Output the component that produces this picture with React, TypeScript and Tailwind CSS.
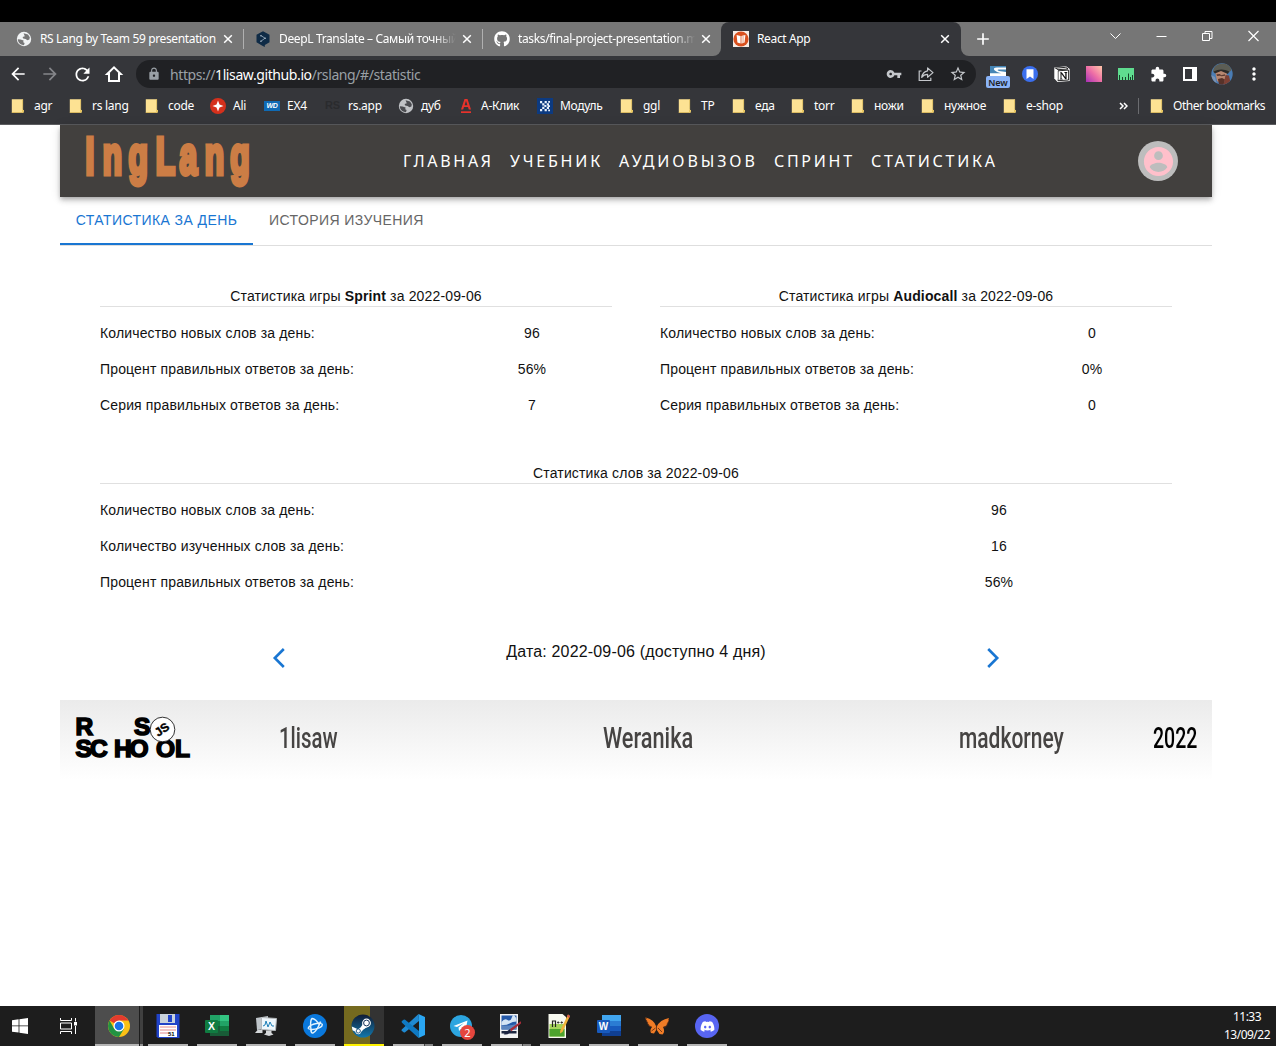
import type { ReactNode } from "react";
import {
  MdAdd, MdArrowBack, MdArrowForward, MdExtension, MdLock, MdMoreVert,
  MdRefresh, MdStarBorder, MdVpnKey,
} from "react-icons/md";
import { FaDiscord, FaGithub } from "react-icons/fa";

/* ---------- small icons ---------- */

const Globe = ({ color = "#f1f3f4", land = "#5f6165" }: { color?: string; land?: string }) => (
  <svg viewBox="0 0 16 16" className="size-4">
    <circle cx="8" cy="8" r="7.200" fill={color} />
    <path d="M1.800 8.200 4.500 8.400 7.600 9.400 7.200 11.200 8.600 12 8 14.200 6 13.800C3.400 12.800 2 11 1.800 8.200zM7.600 2.200 12 3.600 13.800 6.200 13.400 8.400 11.400 9.200 9.600 8 7.200 7.600 6.600 6 8.800 5.200z" fill={land} />
  </svg>
);

const DeepL = () => (
  <svg viewBox="0 0 16 16" className="size-4">
    <path d="M8 .2 14.500 3.800v7.400L9.800 14v2L7.300 14.700 1.500 11.200V3.800z" fill="#0f2b46" />
    <path d="M6 4.600 10 7.200 6 10.200" fill="none" stroke="#8fa3b5" strokeWidth=".9" />
    <circle cx="5.900" cy="4.700" r=".8" fill="#a9b7c4" /><circle cx="10.200" cy="7.200" r=".8" fill="#a9b7c4" /><circle cx="5.900" cy="10.200" r=".8" fill="#a9b7c4" />
  </svg>
);

const AppFavicon = () => (
  <svg viewBox="0 0 16 16" className="size-4">
    <rect width="16" height="16" fill="#f6ece6" />
    <circle cx="8" cy="8" r="7.600" fill="#d9501e" />
    <path d="M3.600 4 7.600 5v7.500L4.400 11.400zM12.400 4 8.400 5v7.500L11.600 11.400z" fill="#fff" />
    <path d="M8.600 5v7.500l1-.3V4.700zM10.300 4.500v7.500l.8-.3V4.300z" fill="#f0b59b" />
  </svg>
);

const Folder = () => (
  <svg viewBox="0 0 16 16" className="size-4">
    <path d="M.8 1.300h11v10.200l1.200 1-.6 2.300H.8z" fill="#fde293" />
    <path d="M11.200 1.300h.9V11l-1.200 1.500.2 2.300h1.300l.6-2.300-1.200-1" fill="#ecc85e" />
    <path d="M.8 14.200h10v.7H.8z" fill="#e3bd58" />
  </svg>
);

const AliIcon = () => (
  <svg viewBox="0 0 16 16" className="size-4">
    <circle cx="8" cy="8" r="8" fill="#d5301c" />
    <path d="M8 2.500 9.500 6.500 13.500 8 9.500 9.500 8 13.500 6.500 9.500 2.500 8 6.500 6.500z" fill="#fff" />
  </svg>
);

const WdIcon = () => (
  <span className="flex h-[10px] w-4 items-center justify-center bg-[#0f6ab4] font-['Liberation_Sans'] text-[7px] leading-none font-bold text-white italic">WD</span>
);

const RsIcon = () => (
  <span className="w-4 font-['Liberation_Sans'] text-[11px] leading-none font-bold text-[#2a2b2e]">RS</span>
);

const AClick = () => (
  <svg viewBox="0 0 16 16" className="size-4">
    <path d="M3 11.500 6.500 1h3L13 11.500h-2.200L10 9H6l-.8 2.500zM6.600 7.200h2.800L8 2.800z" fill="#e8322b" />
    <path d="M3 13.300h10V15H3z" fill="#e8322b" />
  </svg>
);

const ModuleIcon = () => (
  <svg viewBox="0 0 16 16" className="size-4">
    <rect width="16" height="16" fill="#0c3a80" />
    <g fill="#e8f1fb">
      <path d="M3 3h2.200v2.200H3zM5.200 5.200h2.200v2.200H5.200zM7.400 7.100h2v2h-2zM5.200 8.800h2.200V11H5.200zM3 11h2.200v2.200H3z" />
      <path d="M7.600 3h2.200v2.200H7.600zM9.800 5.200H12v2.200H9.800zM10.800 7.200h2.200v1.800h-2.200zM9.800 8.800H12V11H9.800zM7.600 11h2.200v2.200H7.600zM11.200 3h1.800v1.800h-1.800zM11.200 11.400h1.800v1.800h-1.800z" />
    </g>
  </svg>
);

const Share = () => (
  <svg viewBox="0 0 18 18" className="size-[18px]" fill="none" stroke="#c4c7cb" strokeWidth="1.200">
    <path d="M4.500 6H2.200v9.500h11.600v-2.700" />
    <path d="M10.600 3v2.900C7.100 6.500 5.300 8.700 4.700 12.400c1.500-2.200 3.300-3 5.900-3v2.900l5.400-4.700z" strokeLinejoin="round" />
  </svg>
);

const Close = () => (
  <svg viewBox="0 0 10 10" className="size-[10px]" fill="none" stroke="#fff" strokeWidth="1.500"><path d="m1.200 1.200 7.600 7.600M8.800 1.200 1.200 8.800" /></svg>
);

const Home = () => (
  <svg viewBox="0 0 20 20" className="size-5" fill="none" stroke="#fff" strokeWidth="2">
    <path d="M5 17V10H3.200L10 3.400 16.800 10H15v7z" />
  </svg>
);

/* ---------- extension icons ---------- */

const NewExt = () => (
  <span className="relative block h-4 w-4 overflow-visible">
    <svg viewBox="0 0 16 16" className="size-4">
      <rect width="16" height="16" fill="#4585b5" />
      <path d="M16 1.500H7Q2.500 1.800 4.500 4.300 6.500 6.500 11 7.200H0V11h16V6L9 5Q6.500 4 8.500 3.500H16z" fill="#fff" />
    </svg>
    <span className="absolute top-[10px] -left-1 flex h-[12px] w-6 items-center justify-center rounded-[2px] bg-[#8ab4f8] font-['Noto_Sans'] text-[9px] leading-none font-semibold tracking-[-0.1px] text-[#202124]">New</span>
  </span>
);

const BlueBookmark = () => (
  <svg viewBox="0 0 16 16" className="size-4">
    <circle cx="8" cy="8" r="8" fill="#3b6fee" />
    <path d="M4.500 3.200h7v9.800L8 10.500 4.500 13z" fill="#fff" />
  </svg>
);

const NotionIcon = () => (
  <svg viewBox="0 0 16 16" className="size-4">
    <path d="M.3 1.600 12 .3 15.700 3v12L3.500 15.900.3 12.500z" fill="#fff" />
    <path d="M1.500 2.200 11.700 1.300 14 3 4 3.700zM4 4.800 14.600 4.100V14L4 14.700z" fill="none" stroke="#111" strokeWidth=".9" />
    <path d="M1.600 2.800 3.600 4.600V14L1.600 12z" fill="#fff" />
    <path d="M5.800 6.300h2l3.500 5V7l-1-.3V6h3v.6l-.7.4v6.200h-1.300L7.500 8v4.600l1.200.3v.5H5.600V13l.9-.3V7z" fill="#111" />
  </svg>
);

const GradientSquare = () => <span className="size-4 bg-linear-to-bl from-[#ffc7a8] via-[#ee6fa5] to-[#a92ab4]" />;

const Ruler = () => (
  <svg viewBox="0 0 16 16" className="size-4">
    <rect y="2" width="16" height="12" fill="#5fdc8f" />
    <path d="M1.500 14V9M4.500 14v-3M7.500 14v-3M10.500 14V7.500M12.500 14v-3M14.500 14V9" stroke="#17442a" />
  </svg>
);

const SidePanel = () => (
  <svg viewBox="0 0 16 16" className="size-4">
    <path d="M1 1h14v14H1zM3 3v10h7V3z" fill="#fff" fillRule="evenodd" />
  </svg>
);

const Profile = () => (
  <svg viewBox="0 0 22 22" className="size-[22px]">
    <defs><clipPath id="face"><circle cx="11" cy="11" r="10.700" /></clipPath></defs>
    <g clipPath="url(#face)">
      <rect width="22" height="22" fill="#4a7db5" />
      <path d="M0 12 4 14 6 22H0z" fill="#7b93b3" />
      <path d="M4 8 16 8 15.500 15 11 21 6 18z" fill="#b98770" />
      <path d="M2 8Q3 1 11 .5T20.500 7L17.500 10 10 7 3 10z" fill="#5c5d54" />
      <path d="M2.500 8.500Q10 4.500 18 8.200L17 11 10 8 4 10.500z" fill="#2d2a28" />
      <path d="M5.500 11.300 9 11 10 12.200 14 11.300V12.700L10.500 13.200 9 12.800 6 13z" fill="#5c3a30" />
      <path d="M7 16 11 15 14 16.500 12.500 22H8z" fill="#573229" />
      <path d="M14.500 12 18 12.500 20 22H12.500z" fill="#7e4034" />
    </g>
  </svg>
);

/* ---------- browser chrome ---------- */

function Tab({ icon, title, active, divider, fade }: { icon: ReactNode; title: string; active?: boolean; divider?: boolean; fade?: boolean }) {
  return (
    <div className={`relative flex h-[34px] items-center pl-3 ${active ? "w-60 rounded-t-lg bg-[#35363a]" : "w-[239px]"}`}>
      <span className="flex w-6 shrink-0 text-white">{icon}</span>
      <span className={`w-[177px] overflow-hidden text-[12px] tracking-[-0.36px] whitespace-nowrap text-white ${fade ? "mask-r-from-88%" : ""}`}>{title}</span>
      <span className="ml-[3px] flex w-4 justify-center"><Close /></span>
      {divider && <span className="absolute top-[7px] -right-px h-5 w-px bg-[#b0b0b0]" />}
    </div>
  );
}

const WinButton = ({ children }: { children: ReactNode }) => (
  <span className="flex w-[46px] items-center justify-center">
    <svg viewBox="0 0 11 12" className="h-3 w-[11px]" fill="none" stroke="#fff">{children}</svg>
  </span>
);

function TabStrip() {
  return (
    <div className="flex h-[34px] bg-[#767676] pl-1">
      <Tab icon={<Globe land="#767676" />} title="RS Lang by Team 59 presentation" divider />
      <Tab icon={<DeepL />} title="DeepL Translate – Самый точный переводчик" divider fade />
      <div className="bg-[#35363a]">
        <div className="rounded-br-lg bg-[#767676]">
          <Tab icon={<FaGithub size={16} />} title="tasks/final-project-presentation.md" fade />
        </div>
      </div>
      <Tab icon={<AppFavicon />} title="React App" active />
      <div className="flex-1 bg-[#35363a]">
        <div className="flex h-full rounded-bl-lg bg-[#767676] text-white">
          <span className="flex w-11 items-center justify-center"><MdAdd size={20} /></span>
          <div className="ml-auto flex h-7">
            <WinButton><path d="m.5 3.500 5 5 5-5" /></WinButton>
            <WinButton><path d="M.5 6.500h10" /></WinButton>
            <WinButton><path d="M.5 3.500h7v7h-7zM3 3.500V1.500h7v7H7.500" /></WinButton>
            <WinButton><path d="m.5 1 10 10M10.500 1l-10 10" strokeWidth="1.200" /></WinButton>
          </div>
        </div>
      </div>
    </div>
  );
}

const Cell = ({ children }: { children: ReactNode }) => <span className="flex h-8 w-8 items-center justify-center">{children}</span>;

function Toolbar() {
  return (
    <div className="flex h-9 items-center bg-[#35363a] pl-0.5 text-white">
      <Cell><MdArrowBack size={20} /></Cell>
      <Cell><MdArrowForward size={20} color="#85868a" /></Cell>
      <Cell><MdRefresh size={21} /></Cell>
      <Cell><Home /></Cell>
      <div className="ml-1.5 flex h-7 w-[840px] items-center rounded-full bg-[#202124] pr-0.5 pl-[11px] text-[#c4c7cb]">
        <MdLock size={14} color="#9aa0a6" />
        <span className="ml-[9px] flex-1 text-[14px] tracking-[-0.4px] text-[#9aa0a6]">
          https://<span className="text-white">1lisaw.github.io</span>/rslang/#/statistic
        </span>
        <Cell><MdVpnKey size={16} /></Cell>
        <Cell><Share /></Cell>
        <Cell><MdStarBorder size={18} /></Cell>
      </div>
      <div className="ml-1.5 flex">
        <Cell><NewExt /></Cell>
        <Cell><BlueBookmark /></Cell>
        <Cell><NotionIcon /></Cell>
        <Cell><GradientSquare /></Cell>
        <Cell><Ruler /></Cell>
        <Cell><MdExtension size={17} /></Cell>
        <Cell><SidePanel /></Cell>
        <Cell><Profile /></Cell>
        <Cell><MdMoreVert size={20} /></Cell>
      </div>
    </div>
  );
}

const bookmarks: { label: string; icon: ReactNode; width: string }[] = [
  { label: "agr", icon: <Folder />, width: "w-[58px]" },
  { label: "rs lang", icon: <Folder />, width: "w-[76px]" },
  { label: "code", icon: <Folder />, width: "w-[65px]" },
  { label: "Ali", icon: <AliIcon />, width: "w-[54px]" },
  { label: "EX4", icon: <WdIcon />, width: "w-[61px]" },
  { label: "rs.app", icon: <RsIcon />, width: "w-[73px]" },
  { label: "дуб", icon: <Globe color="#c0c2c5" land="#4a4b4f" />, width: "w-[60px]" },
  { label: "А-Клик", icon: <AClick />, width: "w-[79px]" },
  { label: "Модуль", icon: <ModuleIcon />, width: "w-[83px]" },
  { label: "ggl", icon: <Folder />, width: "w-[58px]" },
  { label: "ТР", icon: <Folder />, width: "w-[54px]" },
  { label: "еда", icon: <Folder />, width: "w-[59px]" },
  { label: "torr", icon: <Folder />, width: "w-[60px]" },
  { label: "ножи", icon: <Folder />, width: "w-[70px]" },
  { label: "нужное", icon: <Folder />, width: "w-[82px]" },
  { label: "e-shop", icon: <Folder />, width: "w-[116px]" },
];

function BookmarksBar() {
  return (
    <div className="flex h-[33px] items-center border-b border-[#5c5d60] bg-[#35363a] pb-[5px] pl-[11px] text-[12px] tracking-[-0.28px] text-white">
      {bookmarks.map((b) => (
        <span key={b.label} className={`flex shrink-0 items-center gap-[7px] whitespace-nowrap ${b.width}`}>
          {b.icon}
          {b.label}
        </span>
      ))}
      <svg viewBox="0 0 9 8" className="h-2 w-[9px]" fill="none" stroke="#fff" strokeWidth="1.500"><path d="m1 1 3 3-3 3M5 1l3 3-3 3" /></svg>
      <span className="ml-[10px] h-4 w-px bg-[#6b6c70]" />
      <span className="ml-[11px] flex items-center gap-[7px] tracking-[-0.48px] whitespace-nowrap"><Folder />Other bookmarks</span>
    </div>
  );
}

/* ---------- page ---------- */

const navItems = [
  { label: "ГЛАВНАЯ", style: "w-[107px] tracking-[2.7px]" },
  { label: "УЧЕБНИК", style: "w-[109px] tracking-[2.8px]" },
  { label: "АУДИОВЫЗОВ", style: "w-[155px] tracking-[2.9px]" },
  { label: "СПРИНТ", style: "w-[97px] tracking-[2.7px]" },
  { label: "СТАТИСТИКА", style: "w-[128px] tracking-[2.7px]" },
];

const BrandLogo = () => (
  <svg viewBox="0 0 180 64" className="h-16 w-[180px]">
    <text
      transform="scale(.62 1)"
      x="15.500 43 84.500 128.500 167 207.500 249"
      y="44.500"
      fontFamily="Liberation Sans"
      fontWeight="700"
      fontSize="51"
      fill="#cc7d45"
      stroke="#cc7d45"
      strokeWidth="4.800"
    >
      IngLang
    </text>
  </svg>
);

function SiteHeader() {
  return (
    <header className="flex h-[72px] items-center bg-[#42403e] pl-4 shadow-[0_2px_4px_-1px_rgba(0,0,0,0.2),0_4px_5px_0_rgba(0,0,0,0.14),0_1px_10px_0_rgba(0,0,0,0.12)]">
      <BrandLogo />
      <nav className="ml-[147px] flex text-[16px] text-white">
        {navItems.map((n) => (
          <a key={n.label} className={`whitespace-nowrap ${n.style}`}>{n.label}</a>
        ))}
      </nav>
      <span className="mr-[34px] ml-auto flex size-10 items-center justify-center rounded-full bg-[#bdbdbd]">
        <svg viewBox="0 0 24 24" className="size-[35px]" fill="#ffc0cb">
          <path d="M12 2C6.480 2 2 6.480 2 12s4.480 10 10 10 10-4.480 10-10S17.520 2 12 2zm0 3c1.660 0 3 1.340 3 3s-1.340 3-3 3-3-1.340-3-3 1.340-3 3-3zm0 14.200c-2.500 0-4.710-1.280-6-3.220.03-1.990 4-3.080 6-3.080 1.990 0 5.970 1.090 6 3.080-1.290 1.940-3.500 3.220-6 3.220z" />
        </svg>
      </span>
    </header>
  );
}

function Stats({ title, rows, valueWidth }: { title: ReactNode; rows: [string, string][]; valueWidth: string }) {
  return (
    <section className="text-[14px] leading-5 tracking-[0.15px] text-[#111]">
      <h2 className="h-[21px] border-b border-[#e0e0e0] text-center leading-5">{title}</h2>
      <dl className="pt-2">
        {rows.map(([label, value]) => (
          <div key={label} className="flex h-9 items-center">
            <dt className="flex-1">{label}</dt>
            <dd className={`text-center ${valueWidth}`}>{value}</dd>
          </div>
        ))}
      </dl>
    </section>
  );
}

const SchoolLogo = () => (
  <svg viewBox="0 0 120 48" className="h-12 w-[120px]">
    <g fontFamily="Liberation Sans" fontWeight="700" fontSize="24.500" stroke="#000" strokeWidth="1.600">
      <text x="1.500 60" y="21.500">RS</text>
      <text x="1.500 16 40 55.500 82 101" y="43.500">SCHOOL</text>
    </g>
    <circle cx="88.500" cy="16.500" r="12.300" fill="#fff" stroke="#000" strokeWidth=".8" />
    <text transform="rotate(-35 88 16.500)" x="88" y="20.500" textAnchor="middle" fontFamily="Liberation Sans" fontWeight="700" fontSize="12" stroke="#000" strokeWidth=".4">JS</text>
  </svg>
);

function SiteFooter() {
  return (
    <footer className="flex h-20 items-center bg-linear-to-b from-[#ebebeb] to-white pb-1 font-['Roboto'] text-[30px] font-medium text-[#464443]">
      <span className="ml-[14px] flex w-[205px] pb-0.5"><SchoolLogo /></span>
      <a className="w-[324px] pb-0.5"><span className="inline-block origin-left scale-x-[0.68]">1lisaw</span></a>
      <a className="w-[356px] pb-0.5"><span className="inline-block origin-left scale-x-[0.725]">Weranika</span></a>
      <a className="w-[194px] pb-0.5"><span className="inline-block origin-left scale-x-[0.7]">madkorney</span></a>
      <span className="w-11 pb-0.5"><span className="inline-block origin-left scale-x-[0.65] text-black">2022</span></span>
    </footer>
  );
}

const Chevron = ({ d }: { d: string }) => (
  <svg viewBox="0 0 14 20" className="mt-[13px] h-5 w-[14px]" fill="none" stroke="#1976d2" strokeWidth="2.600"><path d={d} /></svg>
);

function Page() {
  return (
    <main className="mx-[60px] h-[881px] w-[1152px] font-['Liberation_Sans',sans-serif]">
      <div className="font-['Noto_Sans',sans-serif]"><SiteHeader /></div>
      <div className="flex h-[49px] border-b border-[#dedede] text-[14px] tracking-[0.42px]">
        <span className="flex h-12 w-[193px] items-center justify-center border-b-2 border-[#1976d2] whitespace-nowrap text-[#1976d2]">СТАТИСТИКА ЗА ДЕНЬ</span>
        <span className="flex h-[46px] items-center px-4 whitespace-nowrap text-[#666]">ИСТОРИЯ ИЗУЧЕНИЯ</span>
      </div>
      <div className="px-10 pt-10">
        <div className="grid grid-cols-2 gap-12">
          <Stats
            title={<>Статистика игры <b>Sprint</b> за 2022-09-06</>}
            valueWidth="w-40"
            rows={[["Количество новых слов за день:", "96"], ["Процент правильных ответов за день:", "56%"], ["Серия правильных ответов за день:", "7"]]}
          />
          <Stats
            title={<>Статистика игры <b>Audiocall</b> за 2022-09-06</>}
            valueWidth="w-40"
            rows={[["Количество новых слов за день:", "0"], ["Процент правильных ответов за день:", "0%"], ["Серия правильных ответов за день:", "0"]]}
          />
        </div>
        <div className="mt-10">
          <Stats
            title="Статистика слов за 2022-09-06"
            valueWidth="w-[346px]"
            rows={[["Количество новых слов за день:", "96"], ["Количество изученных слов за день:", "16"], ["Процент правильных ответов за день:", "56%"]]}
          />
        </div>
      </div>
      <div className="mx-auto mt-[35px] mb-[17px] flex h-12 w-[728px] justify-between text-[16px] tracking-[0.17px] text-[#111]">
        <Chevron d="m11.800 1-9 9 9 9" />
        <p className="pt-[5px]">Дата: 2022-09-06 (доступно 4 дня)</p>
        <Chevron d="m2.200 1 9 9-9 9" />
      </div>
      <SiteFooter />
    </main>
  );
}

/* ---------- taskbar ---------- */

const Chrome = () => (
  <svg viewBox="0 0 24 24" className="size-6">
    <circle cx="12" cy="12" r="11" fill="#fbc116" />
    <path d="M12 12 2.500 6.500A11 11 0 0 1 21.500 6.500L12 6.500z" fill="#e33b2e" />
    <path d="M2.500 6.500A11 11 0 0 0 12 23l5-8.300L12 12 7.200 14.700z" fill="#229342" />
    <circle cx="12" cy="12" r="5.500" fill="#fff" /><circle cx="12" cy="12" r="4.300" fill="#1a73e8" />
  </svg>
);

const Floppy = () => (
  <svg viewBox="0 0 24 24" className="size-6">
    <path d="M.5 0h23v24H2L.5 22.500z" fill="#2143c8" />
    <path d="M4 0h15v9H4z" fill="#c9d2dc" /><path d="M12 1h4v7h-4z" fill="#2143c8" />
    <path d="M3 11h18v12H3z" fill="#fff" /><path d="M4 13h16M4 16h16M4 19h8" stroke="#e48a8a" />
    <text x="12" y="22" fontSize="6" fontWeight="700" fontFamily="Liberation Sans">51</text>
  </svg>
);

const Excel = () => (
  <svg viewBox="0 0 24 24" className="size-6">
    <path d="M5 1h10v11H5z" fill="#21a366" /><path d="M15 1h9v6h-9z" fill="#33c481" /><path d="M15 7h9v5h-9z" fill="#21a366" />
    <path d="M5 7h10v5H5z" fill="#107c41" /><path d="M5 12h19v10H5z" fill="#185c37" /><path d="M15 12h9v5h-9z" fill="#107c41" />
    <rect y="6" width="13" height="13" rx="1" fill="#107c41" />
    <text x="6.500" y="16.300" textAnchor="middle" fontSize="10.500" fontWeight="700" fill="#fff" fontFamily="Liberation Sans">X</text>
  </svg>
);

const Word = () => (
  <svg viewBox="0 0 24 24" className="size-6">
    <path d="M5 1h19v6H5z" fill="#41a5ee" /><path d="M5 7h19v5H5z" fill="#2b7cd3" />
    <path d="M5 12h19v5H5z" fill="#185abd" /><path d="M5 17h19v5H5z" fill="#103f91" />
    <rect y="6" width="13" height="13" rx="1" fill="#185abd" />
    <text x="6.500" y="16" textAnchor="middle" fontSize="10" fontWeight="700" fill="#fff" fontFamily="Liberation Sans">W</text>
  </svg>
);

const Monitor = () => (
  <svg viewBox="0 0 24 24" className="size-6">
    <path d="M2 4 14 2v13L3 16z" fill="#bfc5ca" /><path d="M3.500 16h5v3H1z" fill="#d5d8da" />
    <path d="M7.500 3.500 22.500 4.500 21.500 16.500 7.500 15.500z" fill="#eef6fb" stroke="#b5b9bc" />
    <path d="m9 12 2-1 1-4 2 6 2-5 2 4h2" fill="none" stroke="#1d7fb8" />
    <path d="M12 16.500h5.500V19l2 1.500L15 22l-5-1.500L12 19z" fill="#d5d8da" />
  </svg>
);

const BattleNet = () => (
  <svg viewBox="0 0 24 24" className="size-6" fill="none" stroke="#e2f4ff" strokeWidth="1.400">
    <circle cx="12" cy="12" r="12" fill="#0a78dc" stroke="none" />
    <path d="M8.500 17.500C7.200 13 7.200 6 9 4.500c2-.3 5.500 3 7.500 6.500" />
    <path d="M18.500 9.500c2 1.500 0 3.500-3 4.700-3.500 1.300-8 1.600-10.500.3" />
    <path d="M17.500 7.500C16 12 12.500 17.500 10 19c-1.500.4-2-1-2-3" />
    <path d="M5 14.500c1-2.500 5-4.500 8.500-5 2-.3 4-.5 5 0" />
  </svg>
);

const SteamMark = () => (
  <svg viewBox="0 0 24 24" className="size-6 shrink-0">
    <defs><linearGradient id="steam" x2="0" y2="1"><stop stopColor="#111d35" /><stop offset="1" stopColor="#1278ad" /></linearGradient></defs>
    <circle cx="12" cy="12" r="11.500" fill="url(#steam)" />
    <path d="M.8 12.500 7 15.200 11.500 12 14 14 10.500 17.500 Q9.500 20.500 7 20.300 4.800 20 4 17.500L1.500 16.300z" fill="#fff" />
    <path d="m10 13 3-5 5 4-5 3z" fill="#fff" />
    <circle cx="15.500" cy="9" r="4.400" fill="#fff" /><circle cx="15.500" cy="9" r="2.900" fill="#fff" stroke="#16345a" />
    <circle cx="7.300" cy="17" r="2.100" fill="none" stroke="#16507d" strokeWidth=".9" />
  </svg>
);

const VsCode = () => (
  <svg viewBox="0 0 24 24" className="size-6">
    <path d="M17.500 0 1 15.200q-1 1 0 1.800l1.600 1.300q.8.400 1.500-.1L18 7z" fill="#1f8ad2" />
    <path d="M17.500 24 1 8.800q-1-1 0-1.800l1.600-1.300q.8-.4 1.500.1L18 17z" fill="#0f79c2" />
    <path d="M17.500 0 18 7v10l-.5 7 6.500-3V3z" fill="#2aa6f2" />
  </svg>
);

const Telegram = () => (
  <span className="relative block size-6">
    <svg viewBox="0 0 24 24" className="size-6">
      <circle cx="11" cy="12" r="11" fill="#2ca5e0" />
      <path d="M3.500 12 17.500 6.500 15.200 18 11 15 9 17 8.500 13.500 14 9 7 13z" fill="#fff" />
    </svg>
    <span className="absolute top-[11px] left-[10px] flex size-[15px] items-center justify-center rounded-full bg-[#e5453d] font-['Noto_Sans'] text-[11px] leading-none text-white">2</span>
  </span>
);

const Paint = () => (
  <svg viewBox="0 0 24 24" className="-ml-1 size-6">
    <path d="M3 0h18v24H3z" fill="#f2f2f2" /><path d="M4.500 1.500h15v14h-15z" fill="#2559a8" />
    <path d="M4.500 8q3-4 6-2T15 3t4.500 2v2.500q-4 0-7 2t-8 1.500z" fill="#d4e5f5" /><path d="M4.500 11q8 1.500 15-1v5.500h-15z" fill="#5b86c0" />
    <path d="M4.500 17h15v2.500h-15z" fill="#1c2740" />
    <path d="M24.500 7 13 15l1 2.500L24.500 9z" fill="#a82c38" /><path d="m13 15-6.500 5q3 2 7.500-2.500z" fill="#1b2340" />
  </svg>
);

const NotepadPP = () => (
  <svg viewBox="0 0 24 24" className="-ml-1 size-6">
    <path d="M2.500 0h14l3.500 3v21H2.500z" fill="#f7f9ef" /><path d="M3.500 10h15v12.500h-15z" fill="#a5d35b" /><path d="M3.500 15h15v7.500h-15z" fill="#4da32c" />
    <path d="M6.500 13V7h3v6" fill="none" stroke="#222" strokeWidth="1.200" /><path d="M11 8.500h2.500M14.500 8.500H17M12.200 7.300v2.400M15.700 7.300v2.400" stroke="#222" strokeWidth=".8" />
    <path d="m22 .5 2 1.500-7.500 16-2.500 1.500.3-3z" fill="#f0b33a" /><path d="m22 .5 2 1.500-1 2-2-1.500z" fill="#d9564b" />
  </svg>
);

const Butterfly = () => (
  <svg viewBox="0 0 24 24" className="-ml-0.5 size-6">
    <path d="M11.500 13Q9 5 .5 3.500q0 3 2 5 .5 3.500 4.500 4.500-2.500 3-1 6l3 .5 2.500-4 3 4.500 3 .5q3-3 .5-7.500 4-.5 4.500-4 1.500-2 1.500-5Q15 5.500 11.500 13z" fill="#f07c26" />
    <path d="M1 3.500q0 3 1.500 5 1 3.500 4 4.500M24 4.500q0 3-1.500 5-1 3.500-4.500 4" fill="none" stroke="#6b3416" strokeWidth="1.100" strokeDasharray="1.500 .7" />
    <path d="M11.500 11v5M6.500 17l4-3M17 18l-4-4" fill="none" stroke="#5b2b12" strokeWidth=".8" />
  </svg>
);

const Discord = () => (
  <span className="flex size-6 items-center justify-center rounded-full bg-[#5865f2]"><FaDiscord size={15} color="#fff" /></span>
);

const leftApps: ReactNode[] = [<Floppy />, <Excel />, <Monitor />, <BattleNet />];

const rightApps: { icon: ReactNode; stacked?: boolean }[] = [
  { icon: <VsCode />, stacked: true },
  { icon: <Telegram /> },
  { icon: <Paint />, stacked: true },
  { icon: <NotepadPP /> },
  { icon: <Word /> },
  { icon: <Butterfly /> },
  { icon: <Discord /> },
];

const AppCell = ({ children, stacked }: { children: ReactNode; stacked?: boolean }) => (
  <span className="flex h-10 w-[49px] flex-col items-center justify-between pt-2 pr-px">
    {children}
    <span className="flex h-0.5 w-10 bg-[#b5b5b5]">{stacked && <span className="ml-auto w-[9px] border-l border-[#444] bg-[#858585]" />}</span>
  </span>
);

function Taskbar() {
  return (
    <div className="flex h-10 bg-[#1d1d1d] text-white">
      <span className="flex w-10 items-center justify-center">
        <svg viewBox="0 0 16 16" className="size-4" fill="#fff"><path d="M0 2.200 6.600 1.300v6.200H0zM7.400 1.200 16 0v7.500H7.400zM0 8.300h6.600v6.300L0 13.700zM7.400 8.300H16V16l-8.600-1.200z" /></svg>
      </span>
      <span className="flex w-[55px] items-center justify-center pl-px">
        <svg viewBox="0 0 17 16" className="h-4 w-[17px]" fill="none" stroke="#fff">
          <path d="M.5 0v2.500h11V0M.5 16v-2.500h11V16M.5 5h11v6H.5zM15.500 0v3.500M15.500 8v8" /><path d="M14 4h3v3.500h-3z" fill="#fff" stroke="none" />
        </svg>
      </span>
      <span className="flex h-10 w-[49px]">
        <span className="flex w-11 flex-col items-center justify-between bg-[#4d4d4d] pt-2 pl-1"><Chrome /><span className="-ml-1 h-0.5 w-11 bg-[#b5b5b5]" /></span>
        <span className="ml-px flex w-[3px] items-end bg-[#404040]"><span className="h-0.5 w-full bg-[#909090]" /></span>
      </span>
      {leftApps.map((icon, i) => <AppCell key={i}>{icon}</AppCell>)}
      <span className="flex w-[49px] flex-col pr-[5px] pl-1">
        <span className="flex h-[38px] justify-center bg-linear-to-r from-[#756a1f] from-65% to-[#333] to-65% pt-2 pr-0.5"><SteamMark /></span>
        <span className="h-0.5 bg-[#fff200]" />
      </span>
      {rightApps.map((a, i) => <AppCell key={i} stacked={a.stacked}>{a.icon}</AppCell>)}
      <div className="mr-1 ml-auto flex w-[50px] flex-col items-center pt-[2px] text-[12px] leading-[18px] tracking-[-0.5px] whitespace-nowrap">
        <span>11:33</span>
        <span>13/09/22</span>
      </div>
    </div>
  );
}

export default function App() {
  return (
    <div className="flex h-[1046px] w-[1276px] flex-col overflow-hidden bg-white font-['Noto_Sans',sans-serif]">
      <div className="h-[22px] bg-black" />
      <TabStrip />
      <Toolbar />
      <BookmarksBar />
      <Page />
      <Taskbar />
    </div>
  );
}
